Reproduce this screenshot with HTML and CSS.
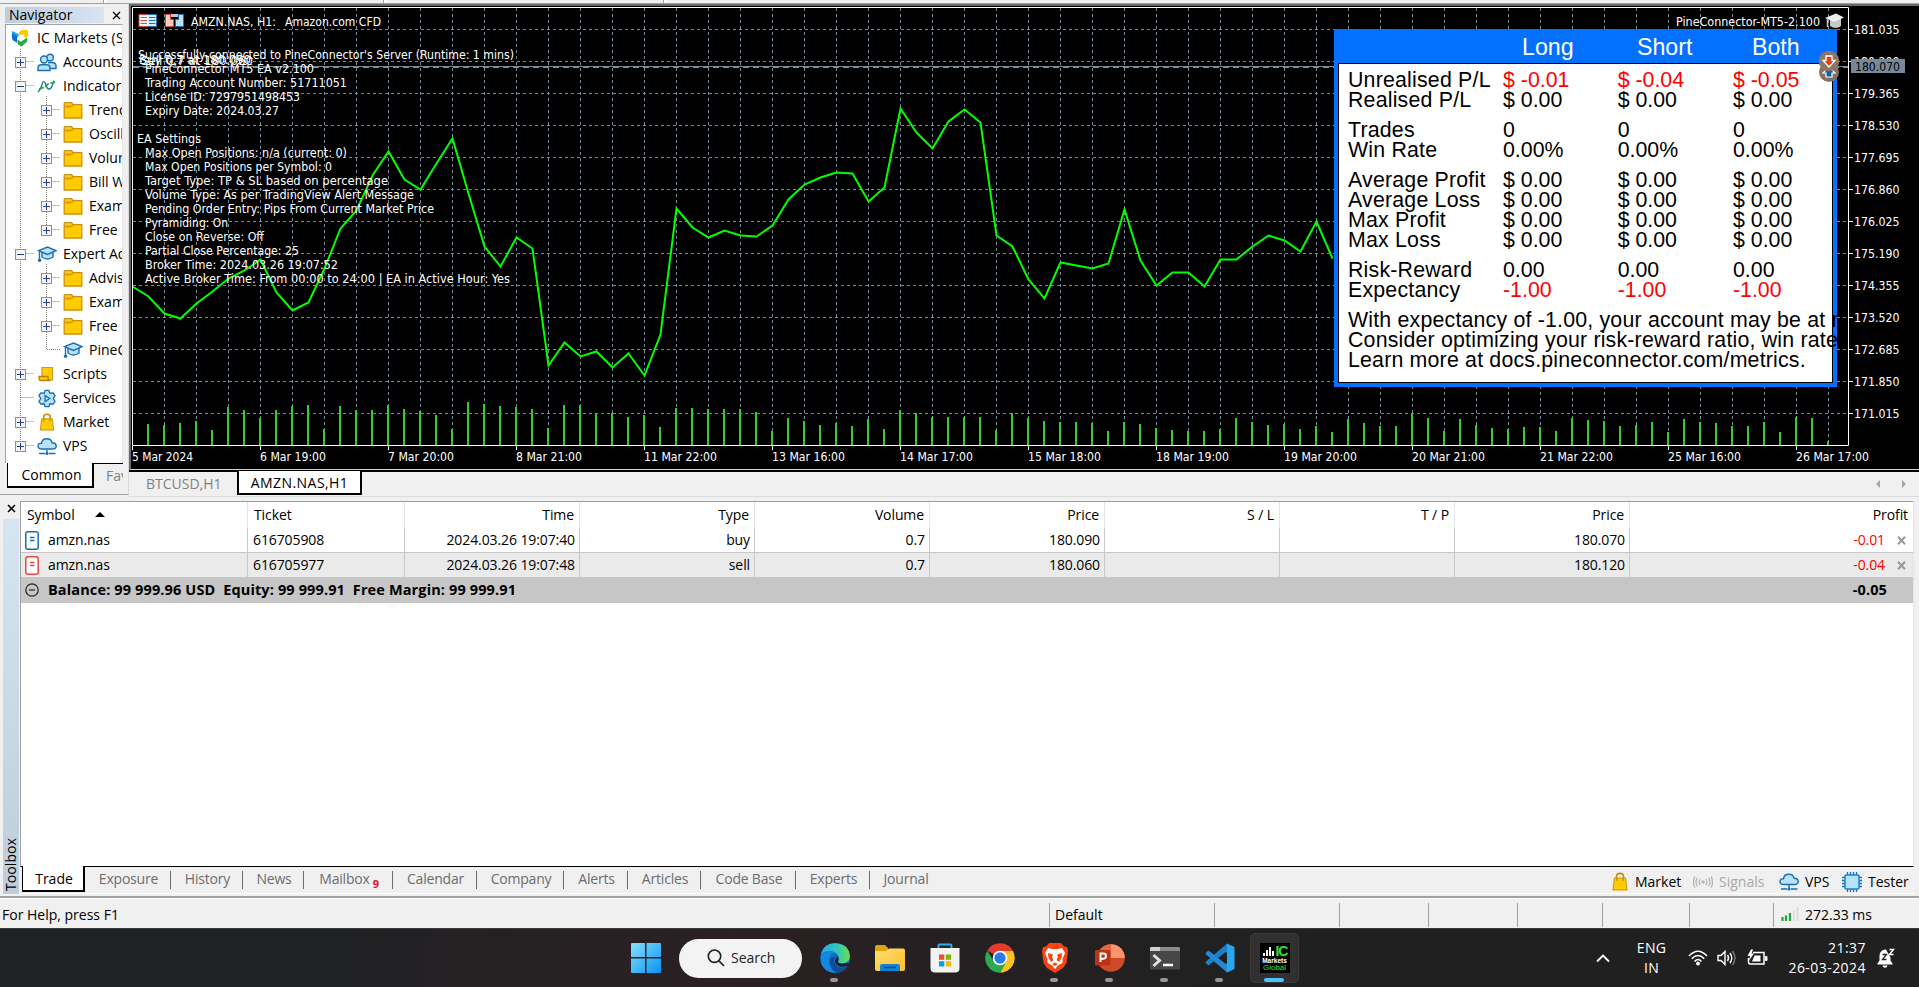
FILE: index.html
```html
<!DOCTYPE html>
<html lang="en">
<head>
<meta charset="utf-8">
<title>IC Markets - AMZN.NAS,H1</title>
<link rel="stylesheet" href="styles.css">
</head>
<body>
<svg width="0" height="0" class="defs">
  <defs>
    <linearGradient id="gw" x1="0" y1="0" x2="1" y2="1"><stop offset="0" stop-color="#84e0fb"/><stop offset="1" stop-color="#0a93f5"/></linearGradient>
    <linearGradient id="ge1" x1="0" y1="0" x2="1" y2="0"><stop offset="0" stop-color="#2aa7e0"/><stop offset=".55" stop-color="#2fc5c0"/><stop offset="1" stop-color="#6be04c"/></linearGradient>
    <linearGradient id="gf" x1="0" y1="0" x2="1" y2="1"><stop offset="0" stop-color="#ffdf70"/><stop offset="1" stop-color="#fdbe2c"/></linearGradient>
    <symbol id="folder" viewBox="0 0 20 18"><path d="M1.2 5V2.2Q1.2 1.2 2.2 1.2H8.6L10.2 3.2H18.8V16.5H1.2Z" fill="#fc0" stroke="#d09010" stroke-width="1.3"/><path d="M1.2 5H8.4L10.2 3.2" fill="none" stroke="#d09010" stroke-width="1.3"/></symbol>
    <symbol id="cap" viewBox="0 0 20 18"><path d="M5 6V11.5Q10.5 15.5 16 11.5V6" fill="#b8e2fb" stroke="#1a6fb0" stroke-width="1.4"/><path d="M1.5 5.2L10.5 1.6 19 5.2 10.5 9Z" fill="#b8e2fb" stroke="#1a6fb0" stroke-width="1.4"/><path d="M2.5 6V14" stroke="#1a6fb0" stroke-width="1.4"/><circle cx="2.6" cy="14.8" r="1.7" fill="#1a6fb0"/></symbol>
    <symbol id="bag" viewBox="0 0 18 20"><path d="M5.5 8V4.5Q5.5 1.4 9 1.4T12.500 4.500V8" fill="none" stroke="#c88a10" stroke-width="1.6"/><path d="M3.500 6H14.500L16 17.800H2Z" fill="#fc0" stroke="#d09a18" stroke-width="1.2"/><path d="M6 6V9M12 6V9" stroke="#c88a10" stroke-width="1.300"/></symbol>
    <symbol id="cloud" viewBox="0 0 20 18"><path d="M5 11.500Q1 11.500 1 8.500T4.500 5.700Q5 1.200 9.800 1.200T15 5.300Q19.200 5.500 19.200 8.500T15.500 11.500Z" fill="#b8e2fb" stroke="#1a6fb0" stroke-width="1.400"/><path d="M10 12V15.500M2 16H8M12 16H18.500" stroke="#1a6fb0" stroke-width="1.400"/><circle cx="10" cy="16" r="1.600" fill="#1a6fb0"/></symbol>
    <symbol id="plus" viewBox="0 0 11 11"><rect x=".5" y=".5" width="10" height="10" fill="#f4f4f4" stroke="#8f8f8f"/><path d="M2 5.500H9M5.500 2V9" stroke="#26408f"/></symbol>
    <symbol id="minus" viewBox="0 0 11 11"><rect x=".5" y=".5" width="10" height="10" fill="#f4f4f4" stroke="#8f8f8f"/><path d="M2 5.500H9" stroke="#26408f"/></symbol>
  </defs>
</svg>

<div class="toolbar-edge"><i></i><i></i><i></i></div>

<main class="work">
  <aside class="navigator">
    <div class="nav-head"><span class="nav-title">Navigator</span><svg class="close" viewBox="0 0 9 9"><path d="M1 1L8 8M8 1L1 8" stroke="#000" stroke-width="1.300"/></svg></div>
    <div class="tree">
      <svg class="tree-lines" width="116" height="440"><path d="M14.500 24V421M14.500 36.500H28M14.500 60.500H28M40.500 71V204M14.500 228.500H28M40.500 239V324.500H55M40.500 84.500H54M40.500 108.500H54M40.500 132.500H54M40.500 156.500H54M40.500 180.500H54M40.500 204.500H54M40.500 252.500H54M40.500 276.500H54M40.500 300.500H54M14.500 348.500H28M14.500 372.500H28M14.500 396.500H28M14.500 420.500H28"/></svg>
      <div class="node root"><svg class="ic" viewBox="0 0 20 20"><path d="M1.500 2L9 5.500 7.500 9 1.500 6Z" fill="#18a0f0"/><path d="M1.500 4.500L7 8V14.500L3 12Q1.500 11 1.500 9Z" fill="#0f6fd8"/><path d="M8.500 3.500L12 1H17Q18.500 1 18.500 3V8L14.500 9.500V5.500L9.500 6.500Z" fill="#fdc800"/><path d="M17.500 9V13.500L11.500 18.500 7.500 16V11L11 13.500Z" fill="#22ac38"/></svg><span>IC Markets (SC) Ltd</span></div>
      <div class="node l1"><svg class="tg"><use href="#plus"/></svg><svg class="ic" viewBox="0 0 20 19"><g fill="#b8e2fb" stroke="#1a6fb0" stroke-width="1.400"><circle cx="13" cy="4.500" r="3.300"/><path d="M10 15.500H19V13Q19 9.500 15 9.500H11"/><circle cx="7" cy="6.500" r="3.500"/><path d="M1 17.500V15Q1 11.800 4.500 11.800H9.500Q13 11.800 13 15V17.500Z"/></g></svg><span>Accounts</span></div>
      <div class="node l1"><svg class="tg"><use href="#minus"/></svg><svg class="ic" viewBox="0 0 20 18"><path d="M1 14.500Q4 12 5 7T8.500 6Q10 12 12.500 11.500T17 3" fill="none" stroke="#1a6fb0" stroke-width="1.300"/><path d="M2 11.500L8 9.500 11 6.500 19 4.500" fill="none" stroke="#22ac38" stroke-width="1.700" stroke-dasharray="5 1.500"/></svg><span>Indicators</span></div>
      <div class="node l2"><svg class="tg"><use href="#plus"/></svg><svg class="ic"><use href="#folder"/></svg><span>Trend</span></div>
      <div class="node l2"><svg class="tg"><use href="#plus"/></svg><svg class="ic"><use href="#folder"/></svg><span>Oscillators</span></div>
      <div class="node l2"><svg class="tg"><use href="#plus"/></svg><svg class="ic"><use href="#folder"/></svg><span>Volumes</span></div>
      <div class="node l2"><svg class="tg"><use href="#plus"/></svg><svg class="ic"><use href="#folder"/></svg><span>Bill Williams</span></div>
      <div class="node l2"><svg class="tg"><use href="#plus"/></svg><svg class="ic"><use href="#folder"/></svg><span>Examples</span></div>
      <div class="node l2"><svg class="tg"><use href="#plus"/></svg><svg class="ic"><use href="#folder"/></svg><span>Free</span></div>
      <div class="node l1"><svg class="tg"><use href="#minus"/></svg><svg class="ic"><use href="#cap"/></svg><span>Expert Advisors</span></div>
      <div class="node l2"><svg class="tg"><use href="#plus"/></svg><svg class="ic"><use href="#folder"/></svg><span>Advisors</span></div>
      <div class="node l2"><svg class="tg"><use href="#plus"/></svg><svg class="ic"><use href="#folder"/></svg><span>Examples</span></div>
      <div class="node l2"><svg class="tg"><use href="#plus"/></svg><svg class="ic"><use href="#folder"/></svg><span>Free</span></div>
      <div class="node l2"><svg class="tg"></svg><svg class="ic"><use href="#cap"/></svg><span>PineConnector</span></div>
      <div class="node l1"><svg class="tg"><use href="#plus"/></svg><svg class="ic" viewBox="0 0 20 18"><path d="M5 2H15.500V14.500H7V11H5Z" fill="#fc0" stroke="#d09a18" stroke-width="1.200"/><path d="M2 11H11V13Q11 15 13.500 15H4Q2 15 2 13Z" fill="#fc0" stroke="#b87c10" stroke-width="1.300"/></svg><span>Scripts</span></div>
      <div class="node l1"><svg class="tg"></svg><svg class="ic" viewBox="0 0 20 20"><path d="M8 1.500H12L13 4.500 16.500 4 18.500 7 16.500 10 18.500 13 16.500 16 13 15.500 12 18.500H8L7 15.500 3.500 16 1.500 13 3.500 10 1.500 7 3.500 4 7 4.500Z" fill="#b8e2fb" stroke="#1a6fb0" stroke-width="1.400" stroke-linejoin="round"/><path d="M8 6.800V13.200L12.800 10Z" fill="#b8e2fb" stroke="#1a6fb0" stroke-width="1.400"/></svg><span>Services</span></div>
      <div class="node l1"><svg class="tg"><use href="#plus"/></svg><svg class="ic"><use href="#bag"/></svg><span>Market</span></div>
      <div class="node l1"><svg class="tg"><use href="#plus"/></svg><svg class="ic"><use href="#cloud"/></svg><span>VPS</span></div>
    </div>
    <div class="nav-tabs"><span class="on">Common</span><span class="off">Favorites</span></div>
  </aside>

  <section class="chart-pane">
    <div class="chart">
      <svg id="chart" width="1789" height="464" viewBox="130 6 1789 464"></svg>
      <div class="metrics">
        <div class="m-head"><span>Long</span><span>Short</span><span>Both</span></div>
        <div class="m-body">
          <div class="m-row neg"><b>Unrealised P/L</b><span>$ -0.01</span><span>$ -0.04</span><span>$ -0.05</span></div>
          <div class="m-row gap"><b>Realised P/L</b><span>$ 0.00</span><span>$ 0.00</span><span>$ 0.00</span></div>
          <div class="m-row"><b>Trades</b><span>0</span><span>0</span><span>0</span></div>
          <div class="m-row gap"><b>Win Rate</b><span>0.00%</span><span>0.00%</span><span>0.00%</span></div>
          <div class="m-row"><b>Average Profit</b><span>$ 0.00</span><span>$ 0.00</span><span>$ 0.00</span></div>
          <div class="m-row"><b>Average Loss</b><span>$ 0.00</span><span>$ 0.00</span><span>$ 0.00</span></div>
          <div class="m-row"><b>Max Profit</b><span>$ 0.00</span><span>$ 0.00</span><span>$ 0.00</span></div>
          <div class="m-row gap"><b>Max Loss</b><span>$ 0.00</span><span>$ 0.00</span><span>$ 0.00</span></div>
          <div class="m-row"><b>Risk-Reward</b><span>0.00</span><span>0.00</span><span>0.00</span></div>
          <div class="m-row neg gap"><b>Expectancy</b><span>-1.00</span><span>-1.00</span><span>-1.00</span></div>
          <p>With expectancy of -1.00, your account may be at ri</p>
          <p>Consider optimizing your risk-reward ratio, win rate,</p>
          <p>Learn more at docs.pineconnector.com/metrics.</p>
        </div>
      </div>
      <svg class="marks" width="22" height="38" viewBox="0 0 22 38"><circle cx="11" cy="23" r="10" fill="#85705f"/><path d="M11 18L17 24H14V28H8V24H5Z" fill="#0c5ea8" stroke="#fff" stroke-width="1.200"/><circle cx="11" cy="12" r="10.300" fill="#8b7667"/><path d="M8 7H14V11.500H17L11 18 5 11.500H8Z" fill="#e8401c" stroke="#fff" stroke-width="1.300"/></svg>
    </div>
    <div class="chart-tabs"><span class="off">BTCUSD,H1</span><span class="on">AMZN.NAS,H1</span><svg class="arrows" width="32" height="10"><path d="M5 1V9L1 5ZM27 1V9L31 5Z" fill="#a6a6a6"/></svg></div>
  </section>
</main>

<section class="toolbox">
  <div class="tb-side"><svg class="close" viewBox="0 0 9 9"><path d="M1 1L8 8M8 1L1 8" stroke="#000" stroke-width="1.500"/></svg><div class="strip"><span>Toolbox</span></div></div>
  <div class="tb-main">
    <div class="grid">
      <div class="tr th"><span class="sym">Symbol<i class="up"></i></span><span class="tk">Ticket</span><span>Time</span><span>Type</span><span>Volume</span><span>Price</span><span>S / L</span><span>T / P</span><span>Price</span><span>Profit</span></div>
      <div class="tr"><span class="sym"><svg class="doc buy" viewBox="0 0 14 19"><rect x=".8" y=".8" width="12.400" height="17.400" rx="2" fill="#fff" stroke="currentColor" stroke-width="1.500"/><path d="M5 6.500H9.500M5 9.500H9.500" stroke="currentColor" stroke-width="1.300"/></svg>amzn.nas</span><span class="tk">616705908</span><span>2024.03.26 19:07:40</span><span>buy</span><span>0.7</span><span>180.090</span><span></span><span></span><span>180.070</span><span class="pl">-0.01<svg class="x" viewBox="0 0 9 9"><path d="M1 .8L8 8.200M8 .8L1 8.200" stroke="#999" stroke-width="2"/></svg></span></div>
      <div class="tr alt"><span class="sym"><svg class="doc sell" viewBox="0 0 14 19"><rect x=".8" y=".8" width="12.400" height="17.400" rx="2" fill="#fff" stroke="currentColor" stroke-width="1.500"/><path d="M5 6.500H9.500M5 9.500H9.500" stroke="currentColor" stroke-width="1.300"/></svg>amzn.nas</span><span class="tk">616705977</span><span>2024.03.26 19:07:48</span><span>sell</span><span>0.7</span><span>180.060</span><span></span><span></span><span>180.120</span><span class="pl">-0.04<svg class="x" viewBox="0 0 9 9"><path d="M1 .8L8 8.200M8 .8L1 8.200" stroke="#999" stroke-width="2"/></svg></span></div>
      <div class="balance"><svg width="14" height="14" viewBox="0 0 14 14"><circle cx="7" cy="7" r="6.200" fill="none" stroke="#222" stroke-width="1.200"/><path d="M4 7H10" stroke="#222" stroke-width="1.200"/></svg><span class="bt">Balance: 99 999.96 USD&nbsp; Equity: 99 999.91&nbsp; Free Margin: 99 999.91</span><span class="tot">-0.05</span></div>
    </div>
    <div class="tb-tabs">
      <span class="on">Trade</span>
      <span style="width:86px">Exposure</span><span style="width:72px">History</span><span style="width:61px">News</span><span style="width:89px">Mailbox<sub>9</sub></span><span style="width:84px">Calendar</span><span style="width:87px">Company</span><span style="width:64px">Alerts</span><span style="width:73px">Articles</span><span style="width:95px">Code Base</span><span style="width:74px">Experts</span><span class="last" style="width:70px">Journal</span>
      <div class="svc">
        <svg width="18" height="20"><use href="#bag"/></svg><em style="width:58px">Market</em>
        <svg width="20" height="18" viewBox="0 0 20 18"><g fill="none" stroke="#b2b2b2" stroke-width="1.200"><circle cx="10" cy="9" r="1.200"/><path d="M7 6Q5.200 9 7 12M13 6Q14.800 9 13 12M4.200 4.700Q1.800 9 4.200 13.300M15.800 4.700Q18.200 9 15.800 13.300M1.800 3.500Q-.8 9 1.800 14.500M18.200 3.500Q20.800 9 18.200 14.500"/></g></svg><em class="dim" style="width:60px">Signals</em>
        <svg width="20" height="18"><use href="#cloud"/></svg><em style="width:37px">VPS</em>
        <svg width="20" height="20" viewBox="0 0 20 20"><path d="M5.500 0V20M8.500 0V20M11.500 0V20M14.500 0V20M0 5.500H20M0 8.500H20M0 11.500H20M0 14.500H20" stroke="#1a6fb0" stroke-width="1.300"/><rect x="3" y="3" width="14" height="14" rx="1" fill="#b8e2fb" stroke="#1482d2" stroke-width="1.500"/></svg><em style="width:39px">Tester</em>
      </div>
    </div>
  </div>
</section>

<footer class="status">
  <span class="help">For Help, press F1</span><span style="width:165px">Default</span><span style="width:125px"></span><span style="width:89px"></span><span style="width:89px"></span><span style="width:85px"></span><span style="width:87px"></span><span style="width:84px"></span>
  <span class="ping"><svg width="18" height="15"><path d="M1.500 15V11M5 15V9.500M9 15V7" stroke="#22a63c" stroke-width="2.200"/><path d="M12.800 15V4M16.500 15V1" stroke="#dcdcdc" stroke-width="2"/></svg>272.33 ms</span>
</footer>

<nav class="taskbar">
  <div class="dock">
    <svg class="win" width="30" height="30" viewBox="0 0 30 30"><path d="M0 1Q0 0 1 0H14V14H0ZM15.500 0H29Q30 0 30 1V14H15.500ZM0 15.500H14V30H1Q0 30 0 29ZM15.500 15.500H30V29Q30 30 29 30H15.500Z" fill="url(#gw)"/></svg>
    <div class="search"><svg width="18" height="18" viewBox="0 0 18 18"><circle cx="7.500" cy="7.200" r="6.200" fill="none" stroke="#222" stroke-width="1.600"/><path d="M12 11.800L17 17" stroke="#222" stroke-width="1.700"/></svg>Search</div>
    <div class="app run"><svg viewBox="0 0 30 30"><circle cx="15" cy="15" r="14.800" fill="#0d6fc9"/><path d="M1 11Q4 0 15 .2 29 .5 29.800 13 30 20 22 20.500 17 20.500 18.500 17 20 12.500 15 9.500 8 6 1 11Z" fill="url(#ge1)"/><path d="M1 12Q8 5.500 14 9.500 8 12 9.500 19 11 26 17 29.500 5 31 1 20Z" fill="#1288de"/><path d="M15 13.500Q12 20 18 24 22 26 28 22.500 24 30 16.500 29.700 9 26 9.500 18 11 13 15 13.500Z" fill="#0b4f9c"/><path d="M17 13Q20 16 17.800 18.500 18.500 21 24 20.500 30 19 29.800 23L27 23Q17 26 14.800 18Z" fill="#242122"/></svg></div>
    <div class="app"><svg viewBox="0 0 30 30"><path d="M0 4Q0 2 2 2H10L13 5V9H0Z" fill="#e0a10d"/><path d="M0 8H11L14 5.500H28Q30 5.500 30 7.500V26Q30 28 28 28H2Q0 28 0 26Z" fill="url(#gf)"/><path d="M5 28V23Q5 21 7 21H23Q25 21 25 23V28Z" fill="#1480d6"/><path d="M9 24.500H21" stroke="#0a4f94" stroke-width="1.500"/></svg></div>
    <div class="app"><svg viewBox="0 0 30 30"><path d="M8.500 7V2.500Q8.500 1.500 9.500 1.500H20.500Q21.500 1.500 21.500 2.500V7" fill="none" stroke="#25b4ee" stroke-width="1.900"/><path d="M.5 5H29.500V25Q29.500 29.500 25 29.500H5Q.5 29.500 .5 25Z" fill="#f2f2f2"/><path d="M9 11.500H14.300V16.800H9Z" fill="#f0502a"/><path d="M15.700 11.500H21V16.800H15.700Z" fill="#7db700"/><path d="M9 18.200H14.300V23.500H9Z" fill="#00a0ec"/><path d="M15.700 18.200H21V23.500H15.700Z" fill="#fdb800"/></svg></div>
    <div class="app"><svg viewBox="0 0 30 30"><path d="M15 15L2.300 7.500A14.800 14.800 0 0 1 28 8Z" fill="#e33b2e"/><path d="M15 8H28A14.800 14.800 0 0 1 15 29.800L21.500 18Z" fill="#fcc31e"/><path d="M2.300 7.500L8.800 18.500 21 19 15 29.800A14.800 14.800 0 0 1 2.300 7.500Z" fill="#2da94f"/><circle cx="15" cy="15" r="7.300" fill="#fff"/><circle cx="15" cy="15" r="5.700" fill="#2a7de9"/></svg></div>
    <div class="app run"><svg viewBox="0 0 30 30"><path d="M9 0H21L24 3.500 27 4 28 8 26.500 20 23 25 15 30 7 25 3.500 20 2 8 3 4 6 3.500Z" fill="#fb4310"/><path d="M8 5L12 6H18L22 5 25 10 22.500 16 22.500 20 18.500 22 15 26 11.500 22 7.500 20V16L5 10Z" fill="#fff"/><path d="M8 10L13 11.500 12 14 13.500 17 11 19 8.500 15ZM22 10L17 11.500 18 14 16.500 17 19 19 21.500 15ZM12 21L15 19.500 18 21 15 23Z" fill="#fb4310"/></svg></div>
    <div class="app run"><svg viewBox="0 0 30 30"><circle cx="16" cy="15" r="13.800" fill="#cf4a28"/><path d="M16 1.200A13.800 13.800 0 0 1 29.800 15H16Z" fill="#ff9470"/><path d="M16 1.200A13.800 13.800 0 0 0 2.200 15H16Z" fill="#e8663f"/><rect x="0" y="7" width="15.500" height="15.500" rx="1.500" fill="#b93418"/><path d="M5.500 19V10.500H8.500Q11 10.500 11 13T8.500 15.700H5.500" fill="none" stroke="#fff" stroke-width="1.900"/></svg></div>
    <div class="app run"><svg viewBox="0 0 30 30"><rect x="0" y="4" width="30" height="22.500" rx="1.500" fill="#474747"/><path d="M0 8V5.500Q0 4 1.500 4H28.500Q30 4 30 5.500V8Z" fill="#8a8a8a"/><path d="M0 8V5.500Q0 4 1.500 4H10V8Z" fill="#cfcfcf"/><path d="M3.500 12L9.500 17.500 3.500 23" fill="none" stroke="#e0e0e0" stroke-width="3"/><path d="M13 22H23" stroke="#fff" stroke-width="2.500"/></svg></div>
    <div class="app run"><svg viewBox="0 0 30 30"><path d="M22 .5L29.500 4V26L22 29.500 21 27V3Z" fill="#2aa5ef"/><path d="M22 .5V8L3.500 22.500 .5 20V19Z" fill="#1b7fc9"/><path d="M22 29.500V22L3.500 7.500 .5 10V11Z" fill="#2489d6"/><path d="M22 9V21L14 15Z" fill="#231f20"/></svg></div>
    <div class="app active"><div class="ic-logo"><svg width="13" height="10"><path d="M1 10V7M4 10V4M7 10V1M10 10V5" stroke="#fff" stroke-width="2"/></svg><b>IC</b><i>Markets</i><u>Global</u></div></div>
  </div>
  <div class="tray">
    <svg class="chev" width="14" height="9" viewBox="0 0 14 9"><path d="M1 7.500L7 1.500 13 7.500" fill="none" stroke="#fff" stroke-width="1.800"/></svg>
    <div class="lang">ENG<br>IN</div>
    <svg class="wifi" width="20" height="16" viewBox="0 0 20 16"><g fill="none" stroke="#fff" stroke-width="1.500"><path d="M1 6Q10-3.500 19 6M3.700 8.700Q10 2.200 16.300 8.700M6.500 11.400Q10 7.800 13.500 11.400"/></g><circle cx="10" cy="13.500" r="1.900" fill="#fff"/></svg>
    <svg class="vol" width="20" height="18" viewBox="0 0 20 18"><g fill="none" stroke="#fff" stroke-width="1.400"><path d="M1 6.500H4L8 2.500V15.500L4 11.500H1Z"/><path d="M10.500 6Q12.500 9 10.500 12M13 4Q16.500 9 13 14"/><path d="M15.500 2Q20.500 9 15.500 16" stroke="#777"/></g></svg>
    <svg class="bat" width="21" height="18" viewBox="0 0 21 18"><path d="M6 3.500H17V15H3Q1.500 15 1.500 12.500V9" fill="none" stroke="#fff" stroke-width="1.500"/><path d="M18.500 7.500H20V11.500H18.500Z" fill="#fff" stroke="#fff"/><path d="M7.500 6.500H13.500V12.500H5Z" fill="#fff"/><path d="M4 .5L.5 7H3L2 11.500 7 4.500H4.500L6 .5Z" fill="#fff"/></svg>
    <div class="clock">21:37<br>26-03-2024</div>
    <svg class="bell" width="18" height="20" viewBox="0 0 18 20"><path d="M8 1.500Q2.500 2.500 2.500 8V12.500L.5 15.500V16.500H15.500V15.500L13.500 12.500V9.500L9 1.500ZM5.500 17.500H10.500Q10 19.700 8 19.700T5.500 17.500Z" fill="#fff"/><path d="M5.500 6.500H9.500L5.500 11.500H9.500" fill="none" stroke="#222" stroke-width="1.300"/><path d="M12.500 1.500H16.500L12.500 6.500H16.500" fill="none" stroke="#fff" stroke-width="1.500"/></svg>
  </div>
</nav>
<script src="script.js"></script>
</body>
</html>
```
FILE: styles.css
```css
* { box-sizing: border-box; }
body {
  margin: 0; width: 1919px; height: 987px; overflow: hidden;
  display: flex; flex-direction: column;
  background: #f0f0f0; color: #000;
  font: 14px/20px "Open Sans", "Noto Sans", sans-serif; letter-spacing: 0;
}
.defs { position: absolute; }
.close { width: 9px; height: 9px; display: block; }

.toolbar-edge { height: 4px; flex: none; display: flex; gap: 276px; padding-left: 103px; background: #f0f0f0; border-bottom: 1px solid #a0a0a0; }
.toolbar-edge i { width: 4px; height: 3px; border-left: 1px solid #a0a0a0; background: #fff; }

.work { display: flex; height: 493px; flex: none; }

/* Navigator */
.navigator { width: 129px; padding: 3px 5px 0; border-bottom: 1px solid #a0a0a0; border-right: 1px solid #d8d8d8; display: flex; flex-direction: column; height: 491px; }
.nav-head { display: flex; align-items: center; height: 17px; padding-bottom: 1px; }
.nav-title { width: 99px; height: 16px; line-height: 15px; padding-left: 4px; background: linear-gradient(90deg, #bfcddb, #d7e4f2); margin-right: 8px; }
.tree { position: relative; height: 439px; border: 1px solid #a0a0a0; border-bottom: 0; border-right-color: #e8e8e8; background: #fff; overflow: hidden; padding-top: 1px; }
.tree-lines { position: absolute; left: 0; top: 0; fill: none; stroke: #808080; stroke-dasharray: 1 1; }
.node { position: relative; display: flex; align-items: center; height: 24px; white-space: nowrap; width: 116px; overflow: hidden; }
.node span { flex: none; padding-bottom: 1px; }
.node .tg { width: 11px; height: 11px; flex: none; margin-right: 11px; }
.node .ic { width: 20px; height: 19px; flex: none; margin-right: 6px; }
.root { padding-left: 4px; letter-spacing: .15px; }
.root .ic { margin-right: 7px; }
.l1 { padding-left: 9px; }
.l2 { padding-left: 35px; }
.nav-tabs { display: flex; height: 26px; width: 118px; overflow: hidden; padding-left: 2px; }
.nav-tabs .on { width: 87px; height: 25px; line-height: 23px; text-align: center; padding-left: 3px; background: #fff; border: solid #000; border-width: 0 2px 2px 1px; }
.nav-tabs .off { flex: 1; height: 25px; line-height: 24px; border-top: 1px solid #000; color: #808080; padding-left: 12px; overflow: hidden; }

/* Chart */
.chart-pane { flex: 1; display: flex; flex-direction: column; }
.chart { position: relative; height: 466px; border-top: 2px solid #696969; border-left: 2px solid #696969; background: #000; border-bottom: 1px solid #d0d0d0; overflow: hidden; }
#chart { display: block; margin-left: -1px; font-family: "DejaVu Sans Condensed", "DejaVu Sans", sans-serif; font-stretch: condensed; font-size: 12px; letter-spacing: 0; }
#chart text { fill: #fff; }
.metrics { position: absolute; left: 1203px; top: 23px; width: 503px; height: 358px; background: #0470ff; padding: 0 4px 4px; overflow: hidden; font-family: "Liberation Sans", Arial, sans-serif; letter-spacing: 0; }
.m-head { display: grid; grid-template-columns: 115px 115px auto; height: 34px; padding-left: 184px; color: #fff; font-size: 23.200px; line-height: 37px; }
.m-body { height: 320px; background: #fff; border: 1px solid #000; padding: 6px 0 0 9px; font-size: 21.330px; line-height: 20px; white-space: nowrap; }
.m-row { display: grid; grid-template-columns: 155px 114.700px 115.300px auto; height: 20px; }
.m-row b { font-weight: 400; letter-spacing: .2px; }
.m-row.gap { margin-bottom: 10px; }
.m-row.neg span { color: #f00; }
.m-body p { margin: 0; letter-spacing: .19px; }
.marks { position: absolute; left: 1687px; top: 43px; }
.chart-tabs { display: flex; align-items: flex-start; height: 27px; border-top: 2px solid #000; border-bottom: 1px solid #dcdcdc; padding-left: 1px; }
.chart-tabs .off { width: 107px; padding-left: 16px; line-height: 24px; color: #808080; }
.chart-tabs .on { width: 125px; height: 24px; margin-top: -1px; text-align: center; line-height: 24px; letter-spacing: .45px; background: #fff; border: solid #000; border-width: 0 2px 2px 2px; }
.arrows { margin: 7px 12px 0 auto; }

/* Toolbox */
.toolbox { display: flex; height: 397px; flex: none; padding-top: 4px; }
.tb-side { width: 20px; display: flex; flex-direction: column; padding: 3px 0 0 3px; }
.tb-side .close { margin-left: 4px; margin-bottom: 6px; }
.strip { width: 16px; height: 375px; background: linear-gradient(#d7e4f2, #bfcddb); display: flex; align-items: flex-end; padding-bottom: 3px; }
.strip span { writing-mode: vertical-rl; transform: rotate(180deg); line-height: 16px; letter-spacing: .1px; }
.tb-main { flex: 1; display: flex; flex-direction: column; margin-right: 5px; }
.grid { height: 366px; flex: none; background: #fff; border: 1px solid #a0a0a0; border-bottom: 1px solid #000; border-right-color: #e4e4e4; letter-spacing: -0.1px; }
.tr { display: grid; grid-template-columns: 227px 157px 175px 175px 175px 175px 175px 175px 175px 1fr; height: 25px; border-bottom: 1px solid #c8c8c8; line-height: 24px; }
.tr > span { text-align: right; padding-right: 4px; border-right: 1px solid #c8c8c8; }
.tr > span:last-child { border-right: 0; }
.tr .sym { display: flex; align-items: center; text-align: left; padding-left: 4px; }
.tr .tk { text-align: left; padding-left: 5px; }
.tr .doc { width: 14px; height: 19px; margin-right: 9px; }
.buy { color: #1a6fb0; }
.sell { color: #e04a40; }
.th { height: 26px; border-bottom: 0; line-height: 26px; }
.th > span { border-color: #e5e5e5; padding-right: 5px; }
.th .sym { padding-left: 6px; }
.th .tk { padding-left: 6px; }
.up { border: 5px solid transparent; border-top: 0; border-bottom-color: #000; margin: -2px 0 0 20px; }
.alt { height: 24px; background: #eaeaea; border-bottom: 0; }
.tr .pl { color: #f00; display: flex; justify-content: flex-end; align-items: center; padding-right: 7px; }
.pl .x { width: 9px; height: 9px; margin-left: 12px; }
.balance { display: flex; align-items: center; height: 26px; padding: 0 26px 1px 4px; background: #c6c6c6; font-size: 14.500px; font-weight: 700; letter-spacing: .13px; }
.bt { margin-left: 9px; }
.tot { margin-left: auto; }
.tb-tabs { display: flex; height: 27px; align-items: flex-start; border-bottom: 1px solid #fff; padding-left: 2px; color: #6d6d6d; }
.tb-tabs > span { height: 18px; margin-top: 4px; line-height: 16px; text-align: center; padding-left: 2px; border-right: 1px solid #6d6d6d; letter-spacing: -0.2px; flex: none; white-space: nowrap; }
.tb-tabs > .last { border: 0; }
.tb-tabs > .on { width: 63px; height: 26px; margin-top: -1px; line-height: 25px; background: #fff; color: #000; border: solid #000; border-width: 0 2px 2px 1px; letter-spacing: 0; }
.tb-tabs sub { color: #e81123; font-size: 11px; font-weight: 700; margin-left: 3px; line-height: 0; }
.svc { display: flex; align-items: center; margin-left: auto; height: 29px; color: #000; padding-right: 7px; }
.svc em { font-style: normal; margin-left: 6px; }
.svc em:last-child { margin-left: 6px; }
.svc .dim { color: #a8a8a8; }

/* Status bar */
.status { display: flex; height: 30px; flex: none; border-top: 1px solid #fff; padding-top: 4px; margin-top: 4px; background: #f0f0f0; box-shadow: 0 -2px #a0a0a0; }
.status span { height: 24px; line-height: 24px; border-left: 1px solid #a0a0a0; padding-left: 5px; flex: none; }
.status .help { width: 1049px; border: 0; padding-left: 2px; }
.status .ping { width: 146px; display: flex; align-items: center; gap: 6px; padding-left: 7px; }
.ping svg { margin-top: -3px; }

/* Taskbar */
.taskbar { display: flex; align-items: center; height: 59px; flex: none; padding-left: 631px; background: linear-gradient(90deg, #212223 0 18%, #2b2023 38%, #222021 58%, #202020); border-top: 1px solid #3a3a3a; color: #fff; }
.dock { display: flex; align-items: center; }
.win { margin-right: 18px; }
.search { width: 123px; height: 39px; border-radius: 20px; background: #f3f3f3; color: #222; display: flex; align-items: center; gap: 6px; padding-left: 28px; margin-right: 5px; }
.app { width: 55px; height: 50px; display: flex; align-items: center; justify-content: center; position: relative; }
.app > svg { width: 30px; height: 30px; }
.run::after, .active::after { content: ""; position: absolute; left: 23px; bottom: 1px; width: 8px; height: 4px; border-radius: 2px; background: #979797; }
.active::before { content: ""; position: absolute; inset: 0 3px; border-radius: 5px; background: #322f30; border: 1px solid #3b3839; }
.active::after { left: 17px; width: 20px; background: #4cc2ff; }
.ic-logo { position: relative; width: 30px; height: 30px; background: #000; display: grid; grid-template-columns: 16px 14px; grid-template-rows: 13px 7px 9px; font: 700 8px/7px "Liberation Sans", sans-serif; padding-top: 1px; }
.ic-logo svg { margin: 2px 0 0 3px; }
.ic-logo b { font-size: 14px; line-height: 14px; color: #2ee12e; letter-spacing: -1.200px; }
.ic-logo i { grid-column: span 2; font-style: normal; font-size: 6.500px; text-align: center; }
.ic-logo u { grid-column: span 2; text-decoration: none; color: #2ee12e; text-align: center; line-height: 8px; font-weight: 400; }
.tray { display: flex; align-items: center; margin-left: auto; padding-right: 24px; line-height: 20px; }
.chev { margin-right: 22px; }
.lang { width: 39px; text-align: center; margin-right: 17px; letter-spacing: .3px; }
.wifi { margin-right: 9px; }
.vol { margin-right: 10px; }
.bat { margin-right: 18px; }
.clock { width: 80px; text-align: right; margin-right: 11px; letter-spacing: .45px; white-space: nowrap; }
```
FILE: script.js
```js
// Price chart: grid, tick volumes, close line, comment block and scales.
const tops = [424,425,423,421,430,407,410,418,410,406,405,429,406,410,410,405,409,411,415,429,402,404,
  406,407,409,428,405,405,414,413,417,415,427,408,408,409,409,409,412,431,418,421,425,423,426,419,429,
  410,413,417,417,417,417,430,413,418,421,422,422,423,431,422,424,428,430,431,431,429,418,422,425,424,
  429,426,432,419,423,426,426,413,418,431,419,425,428,429,427,427,431,418,420,421,426,425,422,432,419,
  422,423,426,426,422,432,417,418,441];
const closes = [286,296,313,318,303,291,278,270,259,292,310,302,268,228,210,175,151,179,189,163,138,193,
  246,266,237,248,365,342,356,351,367,353,375,334,208,227,237,230,235,236,225,199,184,177,172,173,201,
  187,108,132,148,121,109,122,235,246,279,298,262,265,268,263,209,260,285,272,272,286,259,259,246,235,
  240,251,221,258];
const prices = ['181.035','180.200','179.365','178.530','177.695','176.860','176.025','175.190','174.355',
  '173.520','172.685','171.850','171.015'];
const times = ['5 Mar 2024','6 Mar 19:00','7 Mar 20:00','8 Mar 21:00','11 Mar 22:00','13 Mar 16:00',
  '14 Mar 17:00','15 Mar 18:00','18 Mar 19:00','19 Mar 20:00','20 Mar 21:00','21 Mar 22:00',
  '25 Mar 16:00','26 Mar 17:00'];
const comment = [
  [138, 59, 376, "Successfully connected to PineConnector's Server (Runtime: 1 mins)"],
  [139, 64, 112, 'Buy 0.7 at 180.090'], [141, 65, 112, 'Sell 0.7 at 180.060'],
  [145, 73, 169, 'PineConnector MT5 EA v2.100'],
  [145, 87, 202, 'Trading Account Number: 51711051'],
  [145, 101, 155, 'License ID: 7297951498453'],
  [145, 115, 134, 'Expiry Date: 2024.03.27'],
  [137, 143, 64, 'EA Settings'],
  [145, 157, 202, 'Max Open Positions: n/a (current: 0)'],
  [145, 171, 187, 'Max Open Positions per Symbol: 0'],
  [145, 185, 243, 'Target Type: TP & SL based on percentage'],
  [145, 199, 269, 'Volume Type: As per TradingView Alert Message'],
  [145, 213, 289, 'Pending Order Entry: Pips From Current Market Price'],
  [145, 227, 83, 'Pyramiding: On'],
  [145, 241, 119, 'Close on Reverse: Off'],
  [145, 255, 154, 'Partial Close Percentage: 25'],
  [145, 269, 193, 'Broker Time: 2024.03.26 19:07:52'],
  [145, 283, 365, 'Active Broker Time: From 00:00 to 24:00 | EA in Active Hour: Yes'],
  [191, 26, 85, 'AMZN.NAS, H1:'], [285, 26, 96, 'Amazon.com CFD'],
  [1676, 26, 144, 'PineConnector-MT5-2.100']
];
const text = (x, y, w, s, extra = '') =>
  `<text x="${x}" y="${y}" textLength="${w}" lengthAdjust="spacingAndGlyphs" ${extra}>${s.replace('&', '&amp;')}</text>`;

let grid = '', ticks = '', out = '';
for (let x = 164; x < 1848; x += 32) grid += `M${x}.5 8V445`;
for (let y = 29; y < 445; y += 32) { grid += `M133 ${y}.5H1848`; ticks += `M1849 ${y}.5H1853`; }
for (let i = 0; i < 14; i++) ticks += `M${132 + i * 128}.5 446V450`;

out += `<path d="${grid}" stroke="#778899" stroke-dasharray="3 3" fill="none"/>`;
out += '<path d="M133 66.5H1848" stroke="#778899"/><path d="M133 67.5H1848" stroke="#32cd32" stroke-dasharray="6 4"/>';
out += `<path d="${tops.map((t, i) => `M${148 + i * 16} 445V${t}`).join('')}" stroke="#32cd32" stroke-width="2"/>`;
out += `<polyline points="${closes.map((c, i) => `${132.5 + i * 16},${c + 0.5}`).join(' ')}" fill="none" stroke="#0f0" stroke-width="2"/>`;
out += `<path d="M132.5 445.500V7.500H1848.5V445.500Z${ticks}" stroke="#fff" fill="none"/>`;
out += comment.map(c => text(...c)).join('');
out += prices.map((p, i) => text(1854, 34 + i * 32, 45.500, p)).join('');
out += '<rect x="1851" y="59" width="54" height="14" fill="#778899"/>' + text(1855, 71, 45, '180.070', 'style="fill:#000"');
out += times.map((t, i) => text(132 + i * 128, 461, i === 0 ? 61 : i < 4 ? 66 : 73, t)).join('');
out += `<rect x="139" y="14.500" width="17" height="12" fill="#fff" stroke="#d9403a"/><path d="M148 14.500H156.500V26.500H148" fill="#d8ecfb" stroke="#1a6fb0"/>
<path d="M140.500 17.500H147M140.500 20.500H147M140.500 23.500H147" stroke="#e04a40"/><path d="M149 17.500H155.500M149 20.500H155.500M149 23.500H155.500" stroke="#1a6fb0"/>
<path d="M165.500 14.500H170.500V19.500H173.500V26.500H165.500Z" fill="#ffc9c4" stroke="#d9403a"/><path d="M175.500 26.500V19.500H178.500V14.500H183.500V26.500Z" fill="#b8e2fb" stroke="#1a6fb0"/><rect x="171" y="14" width="7" height="3" fill="#c4c4c4"/>
<path d="M1830 19V26Q1836 30 1841 26V19Z" fill="#c8c8c8"/><path d="M1825 18L1836 13.500 1844 17.500 1834 22Z" fill="#eee"/><path d="M1827.500 18V27" stroke="#ccc" stroke-width="1.500"/>`;
document.getElementById('chart').innerHTML = out;
```
